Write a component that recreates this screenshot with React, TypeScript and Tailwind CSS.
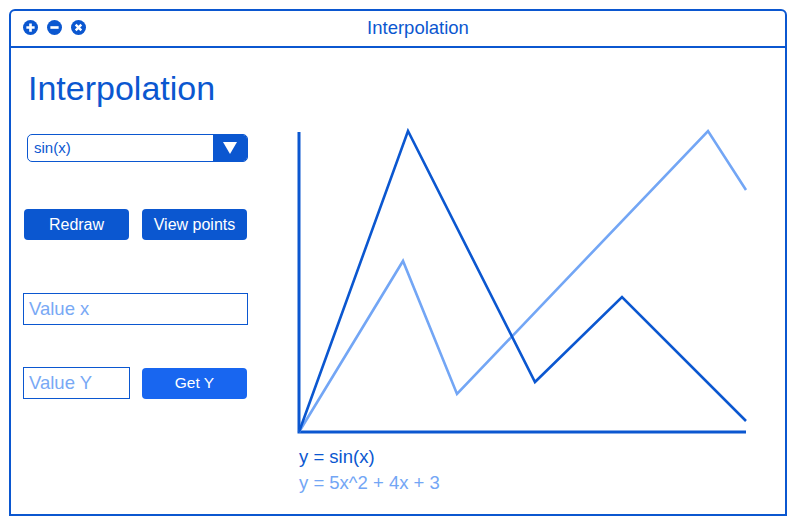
import React from "react";

const DARK = "#0b57d0";
const LIGHT = "#73a6f5";

const TitleIcon = ({ kind }: { kind: "plus" | "minus" | "close" }) => (
  <svg width="15" height="15" viewBox="0 0 16 16">
    <circle cx="8" cy="8" r="8" fill={DARK} />
    {kind === "plus" && <path d="M8 3.6v8.8M3.6 8h8.8" stroke="#fff" strokeWidth="2.8" />}
    {kind === "minus" && <path d="M3.6 8h8.8" stroke="#fff" strokeWidth="2.8" />}
    {kind === "close" && <path d="M5 5l6 6M11 5l-6 6" stroke="#fff" strokeWidth="2.6" />}
  </svg>
);

const Chart = () => (
  <svg width="470" height="320" viewBox="0 0 470 320">
    <polyline points="9,12 9,312 456,312" fill="none" stroke={DARK} strokeWidth="3" />
    <polyline
      points="9,312 113,141 167,274 418,11 456,70"
      fill="none"
      stroke={LIGHT}
      strokeWidth="2.6"
    />
    <polyline
      points="9,312 118,11 245,262 332,177 456,301"
      fill="none"
      stroke={DARK}
      strokeWidth="2.6"
    />
  </svg>
);

export default function App() {
  return (
    <div className="w-[795px] h-[523px] bg-white font-['Liberation_Sans',Arial,sans-serif] overflow-hidden">
      <div className="ml-[9px] mt-[9px] w-[778px] h-[507px] border-2 border-[#0b57d0] rounded-t-[6px] flex flex-col">
        {/* title bar */}
        <div className="h-[37px] border-b-2 border-[#0b57d0] flex items-center relative">
          <div className="flex gap-[9px] ml-[12px] -mt-[2px]">
            <TitleIcon kind="plus" />
            <TitleIcon kind="minus" />
            <TitleIcon kind="close" />
          </div>
          <div className="absolute inset-0 flex items-center justify-center text-[18.5px] text-[#0b57d0] pl-[40px] -mt-[2px]">
            Interpolation
          </div>
        </div>

        <div className="flex flex-1">
          {/* controls */}
          <div className="w-[279px] flex flex-col">
            <h1 className="ml-[17px] mt-[23px] text-[34px] leading-[34px] text-[#0b57d0]">Interpolation</h1>

            <div className="ml-[16px] mt-[29px] w-[221px] h-[28px] border-[1.5px] border-[#0b57d0] rounded-[5px] flex overflow-hidden">
              <div className="flex-1 flex items-center pl-[6px] text-[15px] text-[#0b57d0]">sin(x)</div>
              <div className="w-[34px] bg-[#0b57d0] flex items-center justify-center">
                <svg width="14" height="12" viewBox="0 0 14 12">
                  <path d="M0 0h14L7 12z" fill="#fff" />
                </svg>
              </div>
            </div>

            <div className="ml-[13px] mt-[47px] flex gap-[13px]">
              <button className="w-[105px] h-[31px] bg-[#0b57d0] rounded-[4px] text-white text-[16px]">Redraw</button>
              <button className="w-[105px] h-[31px] bg-[#0b57d0] rounded-[4px] text-white text-[16px]">View points</button>
            </div>

            <div className="ml-[12px] mt-[53px] w-[225px] h-[32px] border-[1.5px] border-[#0b57d0] flex items-center pl-[5px] text-[18.5px] text-[#79a9f5]">
              Value x
            </div>

            <div className="ml-[12px] mt-[42px] flex items-center gap-[12px]">
              <div className="w-[107px] h-[32px] border-[1.5px] border-[#0b57d0] flex items-center pl-[5px] text-[18.5px] text-[#79a9f5]">
                Value Y
              </div>
              <button className="w-[105px] h-[31px] bg-[#1866f0] rounded-[4px] text-white text-[15.5px]">Get Y</button>
            </div>
          </div>

          {/* chart */}
          <div className="flex flex-col mt-[72px]">
            <Chart />
            <div className="ml-[9px] mt-[4px] text-[18.5px] leading-[26px]">
              <div className="text-[#0b57d0]">y = sin(x)</div>
              <div className="text-[#73a6f5]">y = 5x^2 + 4x + 3</div>
            </div>
          </div>
        </div>
      </div>
    </div>
  );
}
